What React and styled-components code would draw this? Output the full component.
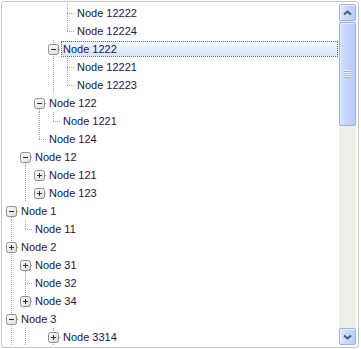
import React from "react";
import styled, { createGlobalStyle } from "styled-components";

const LINE = "#a3a3a3";

const GlobalStyle = createGlobalStyle`
  body {
    margin: 0;
    background: #ffffff;
  }
`;

// each entry of `cols` describes one indent column:
// "|" full line, "T" full line + branch, "L" up + branch, "r" down + branch, "-" branch only
const rows = [
  { label: "Node 12222", cols: ["", "", "", "", "T"] },
  { label: "Node 12224", cols: ["", "", "", "", "L"] },
  { label: "Node 1222", cols: ["", "", "", "T"], exp: "minus", selected: true },
  { label: "Node 12221", cols: ["", "", "", "|", "T"] },
  { label: "Node 12223", cols: ["", "", "", "|", "L"] },
  { label: "Node 122", cols: ["", "", "r"], exp: "minus" },
  { label: "Node 1221", cols: ["", "", "|", "L"] },
  { label: "Node 124", cols: ["", "", "L"] },
  { label: "Node 12", cols: ["", "r"], exp: "minus" },
  { label: "Node 121", cols: ["", "|", "-"], exp: "plus" },
  { label: "Node 123", cols: ["", "|", "-"], exp: "plus" },
  { label: "Node 1", cols: ["r"], exp: "minus" },
  { label: "Node 11", cols: ["|", "L"] },
  { label: "Node 2", cols: ["T"], exp: "plus" },
  { label: "Node 31", cols: ["|", "r"], exp: "plus" },
  { label: "Node 32", cols: ["|", "T"] },
  { label: "Node 34", cols: ["|", "L"], exp: "plus" },
  { label: "Node 3", cols: ["T"], exp: "minus" },
  { label: "Node 3314", cols: ["|", "|", "", "T"], exp: "plus" },
];

const vDots = `repeating-linear-gradient(to bottom, ${LINE} 0 1px, transparent 1px 2px)`;
const hDots = `repeating-linear-gradient(to right, ${LINE} 0 1px, transparent 1px 2px)`;

const lineLayers = (kind) => {
  const layers = [];
  if (kind === "|" || kind === "T") layers.push(`${vDots} 7px 0 / 1px 100% no-repeat`);
  if (kind === "L") layers.push(`${vDots} 7px 0 / 1px 9px no-repeat`);
  if (kind === "r") layers.push(`${vDots} 7px 9px / 1px 9px no-repeat`);
  if (kind === "T" || kind === "L" || kind === "r" || kind === "-")
    layers.push(`${hDots} 7px 9px / 7px 1px no-repeat`);
  return layers.length ? layers.join(", ") : "none";
};

const Frame = styled.div`
  margin: 1px 0 0 1px;
  width: 358px;
  height: 347px;
  box-sizing: border-box;
  border: 1px solid #c6c6c6;
  border-radius: 3px;
  padding: 2px;
  display: flex;
  overflow: hidden;
  background: #ffffff;
`;

const Tree = styled.div`
  width: 335px;
  display: flex;
  flex-direction: column;
  overflow: hidden;
`;

const Row = styled.div`
  display: flex;
  align-items: center;
  height: 18px;
  flex-shrink: 0;
`;

const Indent = styled.div`
  width: 14px;
  height: 18px;
  flex-shrink: 0;
  display: flex;
  align-items: center;
  background: ${(p) => lineLayers(p.$kind)};
`;

const ExpanderBox = styled.svg`
  display: block;
  margin-left: 2px;
`;

const Label = styled.div`
  margin-left: 1px;
  margin-right: 1px;
  padding: 0 1px;
  height: 16px;
  line-height: 15px;
  box-sizing: border-box;
  border: 1px ${(p) => (p.$selected ? "dotted #5f6b7c" : "solid transparent")};
  background: ${(p) =>
    p.$selected ? "linear-gradient(to bottom, #f4f9ff 0%, #e4effd 50%, #d4e6fb 100%)" : "transparent"};
  flex: ${(p) => (p.$selected ? 1 : "none")};
  font-family: "Liberation Sans", Arial, sans-serif;
  font-size: 11px;
  color: #1b1640;
  white-space: nowrap;
`;

const Scrollbar = styled.div`
  width: 17px;
  display: flex;
  flex-direction: column;
  background: #eeede8;
`;

const ArrowButton = styled.div`
  height: 17px;
  box-sizing: border-box;
  border: 1px solid #9db1e4;
  border-radius: 2px;
  background: linear-gradient(to right, #dfe8fd 0%, #c9d8fc 45%, #bccdfa 100%);
  box-shadow: inset 1px 1px 0 #eef3fe;
  display: flex;
  align-items: center;
  justify-content: center;
  flex-shrink: 0;
`;

const Track = styled.div`
  flex: 1;
  display: flex;
  flex-direction: column;
  padding-top: 1px;
`;

const Thumb = styled.div`
  height: 104px;
  box-sizing: border-box;
  border: 1px solid #9db1e4;
  border-radius: 2px;
  background: linear-gradient(to right, #d6e1fd 0%, #c6d5fc 40%, #b9cbfa 100%);
  box-shadow: inset 1px 1px 0 #e6edfe;
  display: flex;
  align-items: center;
  justify-content: center;
`;

const Grip = styled.div`
  width: 7px;
  height: 8px;
  background: repeating-linear-gradient(to bottom, #eef3fe 0 1px, #9fb3e6 1px 2px);
`;

const Expander = ({ type }) => (
  <ExpanderBox width="11" height="11" viewBox="0 0 11 11">
    <defs>
      <linearGradient id={`g-${type}`} x1="0" y1="0" x2="1" y2="1">
        <stop offset="0" stopColor="#ffffff" />
        <stop offset="1" stopColor="#d9d9d9" />
      </linearGradient>
    </defs>
    <rect x="0.5" y="0.5" width="10" height="10" rx="2" fill={`url(#g-${type})`} stroke="#8e8f8f" />
    <rect x="3" y="5" width="5" height="1" fill="#2f2f2f" />
    {type === "plus" && <rect x="5" y="3" width="1" height="5" fill="#2f2f2f" />}
  </ExpanderBox>
);

const Chevron = ({ down }) => (
  <svg width="9" height="6" viewBox="0 0 9 6">
    <path
      d={down ? "M1 1.5 L4.5 4.5 L8 1.5" : "M1 4.5 L4.5 1.5 L8 4.5"}
      fill="none"
      stroke="#4a5b7e"
      strokeWidth="2"
    />
  </svg>
);

export default function App() {
  return (
    <>
      <GlobalStyle />
      <Frame>
        <Tree>
          {rows.map((row) => (
            <Row key={row.label}>
              {row.cols.map((kind, i) => (
                <Indent key={i} $kind={kind}>
                  {i === row.cols.length - 1 && row.exp && <Expander type={row.exp} />}
                </Indent>
              ))}
              <Label $selected={row.selected}>{row.label}</Label>
            </Row>
          ))}
        </Tree>
        <Scrollbar>
          <ArrowButton>
            <Chevron />
          </ArrowButton>
          <Track>
            <Thumb>
              <Grip />
            </Thumb>
          </Track>
          <ArrowButton>
            <Chevron down />
          </ArrowButton>
        </Scrollbar>
      </Frame>
    </>
  );
}
